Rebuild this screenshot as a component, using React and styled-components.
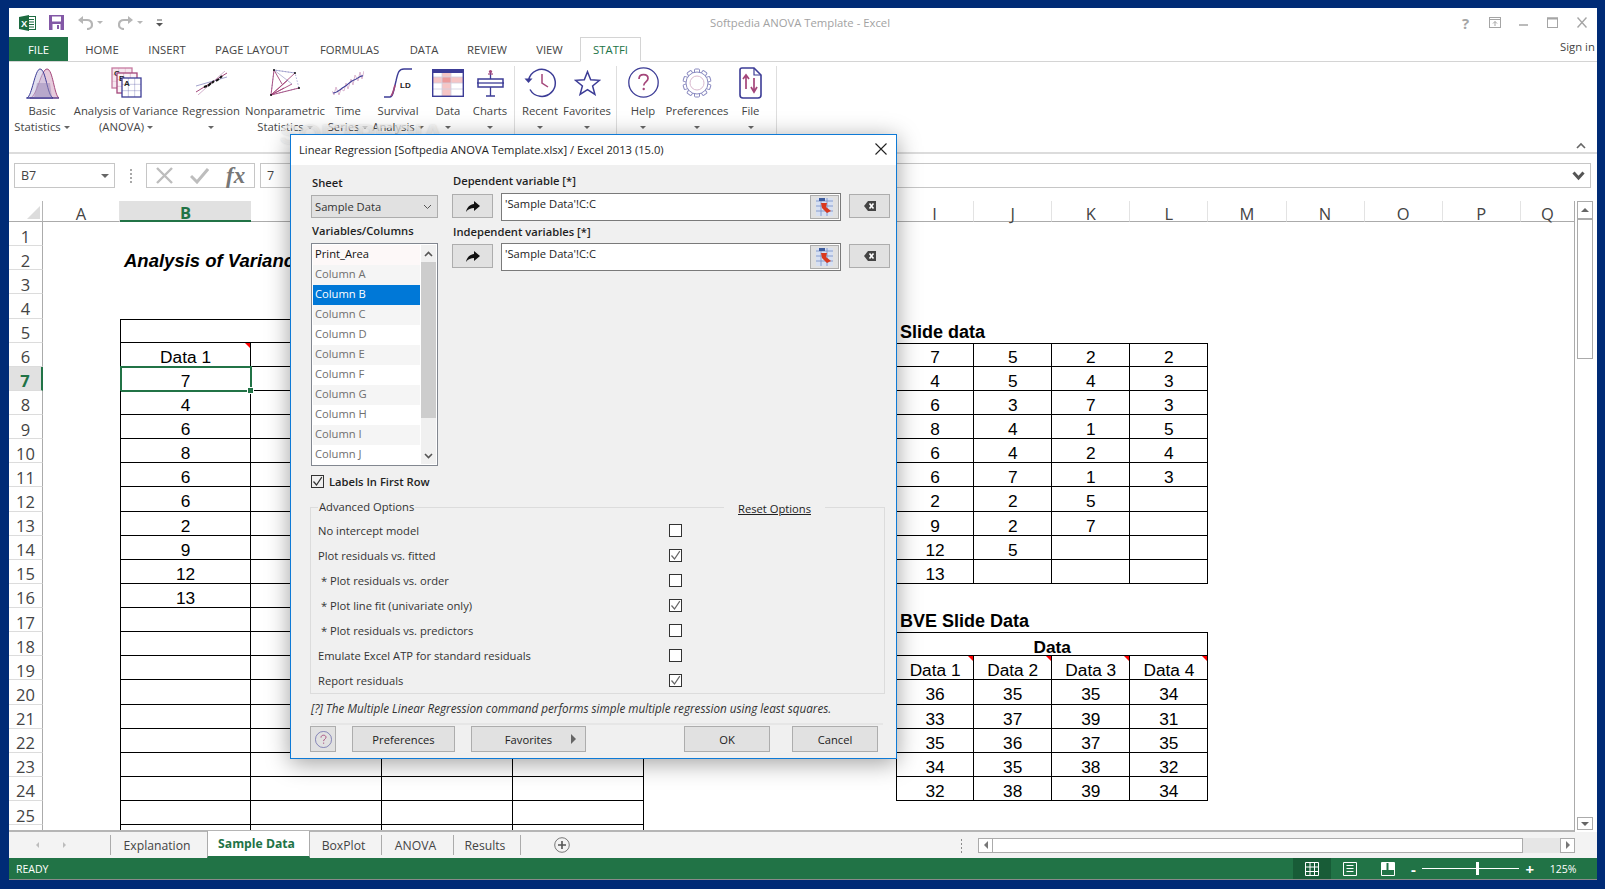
import React from "react";
import styled, { createGlobalStyle } from "styled-components";

const UI = `"Open Sans", "Noto Sans", sans-serif`;
const PURPLE = "#3c3c96";
const WINE = "#a4467a";
const GREEN = "#217346";

const GlobalStyle = createGlobalStyle`
  html, body { margin: 0; padding: 0; height: 100%; overflow: hidden; }
  body { background: #002b76; font-family: ${UI}; }
  #root { height: 100%; }
`;

const Frame = styled.div`
  width: 1605px;
  height: 889px;
  box-sizing: border-box;
  padding: 8px 8px 9px 9px;
  position: relative;
  overflow: hidden;
`;

const ExcelWindow = styled.div`
  height: 100%;
  background: #fff;
  display: flex;
  flex-direction: column;
  overflow: hidden;
`;

/* title bar */
const TitleBar = styled.div`
  height: 29px;
  flex: none;
  display: flex;
  align-items: center;
`;

const QuickBar = styled.div`
  display: flex;
  align-items: center;
  width: 420px;
  flex: none;
  padding-left: 10px;
  box-sizing: border-box;
`;

const QuickItem = styled.div`
  display: flex;
  align-items: center;
  margin-left: ${({ $ml }) => $ml || 0}px;
`;

const Caret = styled.span`
  display: inline-block;
  width: 0;
  height: 0;
  border-left: 3px solid transparent;
  border-right: 3px solid transparent;
  border-top: 3px solid ${({ $color }) => $color || "#666"};
  vertical-align: middle;
  margin-left: ${({ $gap }) => $gap ?? 3}px;
`;

const WindowTitle = styled.div`
  width: 742px;
  flex: none;
  text-align: center;
  font-size: 11.3px;
  color: #a2a2a2;
  white-space: nowrap;
`;

const WinButtons = styled.div`
  display: flex;
  align-items: center;
  margin-left: auto;
  padding-right: 1px;
`;

const WinSlot = styled.div`
  width: 29px;
  flex: none;
  display: flex;
  align-items: center;
  justify-content: center;
  color: #a5a5a5;
  font-size: 15px;
  font-weight: 700;
`;

const TabRow = styled.div`
  height: 25px;
  flex: none;
  display: flex;
  align-items: stretch;
  border-bottom: 1px solid #d4d4d4;
  box-sizing: border-box;
  font-size: 11.3px;
  color: #444;
`;

const RibbonTab = styled.div`
  width: ${({ $w }) => $w}px;
  flex: none;
  display: flex;
  align-items: center;
  justify-content: center;
  box-sizing: border-box;
  white-space: nowrap;
  ${({ $file }) => $file && `background: ${GREEN}; color: #fff;`}
  ${({ $active }) =>
    $active &&
    `color: ${GREEN}; background: #fff; border: 1px solid #d4d4d4; border-bottom: 1px solid #fff; height: 25px;`}
`;

const SignIn = styled.div`
  margin-left: auto;
  align-self: flex-start;
  margin-top: 2px;
  font-size: 11.3px;
  color: #444;
  width: 37px;
  white-space: nowrap;
  overflow: hidden;
`;

/* ribbon */
const Ribbon = styled.div`
  height: 92px;
  flex: none;
  display: flex;
  box-sizing: border-box;
  padding-left: 5px;
  border-bottom: 2px solid #dcdcdc;
  position: relative;
`;

const RibbonItem = styled.div`
  width: ${({ $w }) => $w}px;
  flex: none;
  display: flex;
  flex-direction: column;
  align-items: center;
  font-size: 11.3px;
  line-height: 16px;
  color: #444;
  white-space: nowrap;
`;

const IconSlot = styled.div`
  height: 41px;
  flex: none;
  display: flex;
  align-items: center;
  justify-content: center;
`;

const RibbonSep = styled.div`
  width: 1px;
  flex: none;
  height: 68px;
  margin-top: 4px;
  background: #dedede;
`;

const RibbonSpacer = styled.div`
  width: ${({ $w }) => $w}px;
  flex: none;
`;

const CollapseMark = styled.svg`
  position: absolute;
  right: 11px;
  bottom: 3px;
`;

/* formula bar */
const FormulaBar = styled.div`
  height: 47px;
  flex: none;
  display: flex;
  box-sizing: border-box;
  padding: 9px 6px 0 5px;
  gap: 5px;
`;

const BarBox = styled.div`
  height: 25px;
  box-sizing: border-box;
  border: 1px solid #c6c6c6;
  background: #fff;
  display: flex;
  align-items: center;
  font-size: 12.5px;
  color: #444;
  width: ${({ $w }) => ($w ? `${$w}px` : "auto")};
  flex: ${({ $w }) => ($w ? "none" : "1")};
  padding: 0 5px 0 6px;
  justify-content: space-between;
`;

const GripDots = styled.div`
  width: 21px;
  flex: none;
  height: 25px;
  display: flex;
  flex-direction: column;
  justify-content: center;
  align-items: center;
  gap: 2px;
  span { width: 2px; height: 2px; background: #a8a8a8; }
`;

const FxIcons = styled.div`
  display: flex;
  align-items: center;
  gap: 17px;
  width: 100%;
  padding-left: 3px;
`;

const FxMark = styled.span`
  font-family: "Liberation Serif", serif;
  font-style: italic;
  font-weight: 700;
  font-size: 23px;
  color: #777;
  line-height: 1;
`;

/* sheet */
const SheetArea = styled.div`
  height: 631px;
  flex: none;
  display: flex;
`;

const SheetGrid = styled.div`
  width: 1566px;
  flex: none;
  overflow: hidden;
  display: grid;
  grid-template-columns: 34px 77px repeat(4, 131.1px) repeat(3, 83.9px) repeat(8, 78.1px) 54px;
  grid-auto-rows: 24.14px;
  grid-template-rows: 21px;
  font-family: "Liberation Sans", Arial, sans-serif;
  font-size: 17.3px;
  color: #000;
  border-right: 1px solid #ababab;
  border-bottom: 2px solid #b5b5b5;
  box-sizing: border-box;
`;

const Corner = styled.div`
  border-right: 1px solid #b5b5b5;
  border-bottom: 1px solid #ababab;
  box-sizing: border-box;
  position: relative;
  &::after {
    content: "";
    position: absolute;
    right: 2px;
    bottom: 2px;
    border-left: 13px solid transparent;
    border-bottom: 13px solid #dcdcdc;
  }
`;

const ColHead = styled.div`
  display: flex;
  align-items: center;
  justify-content: center;
  font-family: ${UI};
  font-size: 16.5px;
  box-sizing: border-box;
  padding-top: 4px;
  color: #444;
  border-right: 1px solid #e3e3e3;
  border-bottom: 1px solid #ababab;
  ${({ $active }) =>
    $active &&
    `background: #e1e1e1; color: ${GREEN}; font-weight: 700; border-bottom: 2px solid ${GREEN}; border-right: none;`}
`;

const RowHead = styled.div`
  display: flex;
  align-items: center;
  justify-content: center;
  font-family: ${UI};
  font-size: 16.5px;
  box-sizing: border-box;
  padding-top: 5px;
  color: #444;
  border-right: 1px solid #ababab;
  border-bottom: 1px solid #dcdcdc;
  ${({ $active }) =>
    $active &&
    `background: #e1e1e1; color: ${GREEN}; font-weight: 700; border-right: 2px solid ${GREEN};`}
`;

const Cell = styled.div`
  grid-column: span ${({ $span }) => $span || 1};
  display: flex;
  align-items: center;
  justify-content: center;
  position: relative;
  box-sizing: border-box;
  padding-top: 6px;
  white-space: nowrap;
  min-width: 0;
  font-weight: ${({ $bold }) => ($bold ? 700 : 400)};
  ${({ $box }) => $box && "border-right: 1px solid #000; border-bottom: 1px solid #000;"}
  ${({ $first }) => $first && "border-left: 1px solid #000;"}
  ${({ $top }) => $top && "border-top: 1px solid #000;"}
  ${({ $note }) =>
    $note &&
    `&::after {
      content: "";
      position: absolute;
      top: 0;
      right: 0;
      border-top: 5px solid #f00;
      border-left: 5px solid transparent;
    }`}
  ${({ $current }) =>
    $current &&
    `&::before {
      content: "";
      position: absolute;
      inset: -1px -2px -2px -1px;
      border: 2px solid ${GREEN};
      pointer-events: none;
    }
    &::after {
      content: "";
      position: absolute;
      right: -4px;
      bottom: -4px;
      width: 5px;
      height: 5px;
      background: ${GREEN};
      border: 1px solid #fff;
      z-index: 2;
    }`}
`;

const Heading = styled.span`
  position: absolute;
  left: ${({ $left }) => $left}px;
  top: ${({ $y }) => $y || 3}px;
  font-weight: 700;
  font-size: ${({ $size }) => $size}px;
  font-style: ${({ $italic }) => ($italic ? "italic" : "normal")};
`;

const VScroll = styled.div`
  flex: 1;
  display: flex;
  flex-direction: column;
  padding: 0 4px 2px 2px;
  box-sizing: border-box;
`;

const ScrollBtn = styled.div`
  height: ${({ $h }) => $h}px;
  flex: none;
  box-sizing: border-box;
  border: 1px solid #ababab;
  display: flex;
  align-items: center;
  justify-content: center;
  background: #fff;
`;

const VThumb = styled.div`
  height: 140px;
  flex: none;
  box-sizing: border-box;
  border: 1px solid #ababab;
  background: #fff;
`;

const VTrack = styled.div`
  flex: 1;
  background: #fff;
`;

const Tri = styled.span`
  width: 0;
  height: 0;
  display: inline-block;
  ${({ $dir, $c = "#777", $s = 4 }) => {
    const side = `${$s}px solid transparent`;
    const solid = `${$s}px solid ${$c}`;
    if ($dir === "up") return `border-left:${side};border-right:${side};border-bottom:${solid};`;
    if ($dir === "down") return `border-left:${side};border-right:${side};border-top:${solid};`;
    if ($dir === "left") return `border-top:${side};border-bottom:${side};border-right:${solid};`;
    return `border-top:${side};border-bottom:${side};border-left:${solid};`;
  }}
`;

/* sheet tabs */
const TabsBar = styled.div`
  height: 26px;
  flex: none;
  background: #f3f3f3;
  display: flex;
  align-items: center;
  font-size: 12.2px;
  color: #444;
`;

const NavArrows = styled.div`
  width: 101px;
  flex: none;
  display: flex;
  gap: 24px;
  padding-left: 27px;
  box-sizing: border-box;
`;

const SheetTab = styled.div`
  width: ${({ $w }) => $w}px;
  height: 26px;
  flex: none;
  display: flex;
  align-items: center;
  justify-content: center;
  box-sizing: border-box;
  padding-right: 4px;
  ${({ $active }) =>
    $active
      ? `background: #fff; color: ${GREEN}; font-weight: 700; border-bottom: 2px solid ${GREEN}; border-left: 1px solid #ababab; border-right: 1px solid #ababab; margin-top: -1px; height: 27px;`
      : ""}
`;

const TabSep = styled.div`
  width: 1px;
  height: 20px;
  flex: none;
  background: #ababab;
`;

const AddSheet = styled.svg`
  margin-left: 33px;
  flex: none;
`;

const HScroll = styled.div`
  margin-left: auto;
  margin-right: 22px;
  width: 597px;
  height: 15px;
  flex: none;
  display: flex;
  background: #e6e6e6;
  position: relative;
`;

const HBtn = styled.div`
  width: ${({ $w }) => $w}px;
  flex: none;
  box-sizing: border-box;
  border: 1px solid #ababab;
  ${({ $thumb }) => $thumb && "border-left: none;"}
  background: #fff;
  display: flex;
  align-items: center;
  justify-content: center;
`;

const HGap = styled.span`
  flex: 1;
`;

const Grip = styled.div`
  position: absolute;
  left: -17px;
  top: 1px;
  display: flex;
  flex-direction: column;
  gap: 2px;
  span { width: 1px; height: 2px; background: #8c8c8c; }
`;

/* status bar */
const StatusBar = styled.div`
  flex: 1;
  background: ${GREEN};
  color: #fff;
  display: flex;
  align-items: center;
  font-size: 10.5px;
  padding-left: 7px;
  border-bottom: 1px solid #8a8a8a;
`;

const StatusRight = styled.div`
  margin-left: auto;
  display: flex;
  align-items: center;
  height: 100%;
`;

const ViewBtn = styled.div`
  width: 38px;
  height: 100%;
  display: flex;
  align-items: center;
  justify-content: center;
  background: ${({ $on }) => ($on ? "#185c37" : "transparent")};
`;

const Zoom = styled.div`
  display: flex;
  align-items: center;
  margin-left: 4px;
  width: 123px;
  flex: none;
  gap: 6px;
  font-size: 15px;
  font-weight: 700;
`;

const Slider = styled.div`
  flex: 1;
  height: 1px;
  background: #fff;
  position: relative;
  &::after {
    content: "";
    position: absolute;
    left: 54px;
    top: -6px;
    width: 3px;
    height: 13px;
    background: #fff;
  }
`;

const ZoomPct = styled.div`
  width: 63px;
  flex: none;
  text-align: center;
  padding-right: 5px;
  box-sizing: border-box;
`;

/* watermark */
const Watermark = styled.div`
  position: absolute;
  left: 280px;
  top: 118px;
  font-family: "Liberation Sans", sans-serif;
  font-weight: 700;
  font-size: 28.5px;
  color: rgba(255, 255, 255, 0.7);
  text-shadow: 0 0 2px rgba(130, 130, 130, 0.3);
  white-space: nowrap;
`;

/* dialog */
const Dialog = styled.div`
  position: absolute;
  left: 290px;
  top: 134px;
  width: 607px;
  height: 625px;
  box-sizing: border-box;
  border: 1px solid #0e7ad6;
  background: #f0f0f0;
  box-shadow: 0 4px 22px rgba(0, 0, 0, 0.38);
  font-size: 11.2px;
  color: #222;
  display: flex;
  flex-direction: column;
`;

const DialogTitle = styled.div`
  height: 30px;
  flex: none;
  box-sizing: border-box;
  background: #fff;
  display: flex;
  align-items: center;
  justify-content: space-between;
  padding: 0 9px 2px 8px;
  color: #1e1e1e;
`;

const DialogBody = styled.div`
  flex: 1;
  display: flex;
  flex-direction: column;
  padding: 0 11px 0 20px;
`;

const TopColumns = styled.div`
  display: flex;
  height: 342px;
  flex: none;
`;

const LeftCol = styled.div`
  width: 127px;
  flex: none;
  margin-right: 14px;
  display: flex;
  flex-direction: column;
`;

const RightCol = styled.div`
  flex: 1;
  display: flex;
  flex-direction: column;
`;

const FieldLabel = styled.div`
  font-weight: 600;
  color: #1f1f1f;
  height: ${({ $h }) => $h}px;
  line-height: ${({ $h, $pt = 0 }) => $h - $pt}px;
  padding: ${({ $pt = 0 }) => $pt}px 0 0 1px;
  box-sizing: border-box;
  flex: none;
  white-space: nowrap;
`;

const SelectBox = styled.div`
  height: 23px;
  flex: none;
  box-sizing: border-box;
  background: #e1e1e1;
  border: 1px solid #adadad;
  display: flex;
  align-items: center;
  justify-content: space-between;
  padding: 0 5px 0 3px;
  color: #333;
`;

const ListBox = styled.div`
  height: 223px;
  flex: none;
  box-sizing: border-box;
  border: 1px solid #828790;
  background: #fff;
  display: flex;
  padding: 1px;
`;

const ListItems = styled.div`
  flex: 1;
  overflow: hidden;
`;

const ListRow = styled.div`
  height: 20px;
  line-height: 18px;
  padding-left: 2px;
  color: ${({ $state }) => ($state === "on" ? "#fff" : $state === "top" ? "#111" : "#6f6f6f")};
  background: ${({ $state, $alt }) =>
    $state === "on" ? "#0078d7" : $state === "top" ? "#fdf8f8" : $alt ? "#f5f5f5" : "#fff"};
`;

const ListScroll = styled.div`
  width: 15px;
  flex: none;
  margin-left: 1px;
  background: #f0f0f0;
  display: flex;
  flex-direction: column;
`;

const ListArrow = styled.div`
  height: 17px;
  flex: none;
  display: flex;
  align-items: center;
  justify-content: center;
`;

const ListThumb = styled.div`
  height: 156px;
  flex: none;
  background: #cdcdcd;
`;

const ListRest = styled.span`
  flex: 1;
`;

const CheckRow = styled.label`
  display: flex;
  align-items: center;
  gap: 5px;
  height: 30px;
  flex: none;
  font-weight: 600;
  white-space: nowrap;
`;

const CheckBox = styled.span`
  width: 13px;
  height: 13px;
  flex: none;
  box-sizing: border-box;
  border: 1px solid #333;
  background: ${({ $plain }) => ($plain ? "transparent" : "#fff")};
  display: flex;
  align-items: center;
  justify-content: center;
`;

const RefRow = styled.div`
  display: flex;
  align-items: flex-start;
  height: 28px;
  flex: none;
`;

const ArrowBtn = styled.div`
  width: 41px;
  height: 24px;
  flex: none;
  box-sizing: border-box;
  background: #e1e1e1;
  border: 1px solid #adadad;
  display: flex;
  align-items: center;
  justify-content: center;
  margin-top: 1px;
  margin-right: ${({ $last }) => ($last ? 0 : 8)}px;
`;

const RefInput = styled.div`
  width: 340px;
  height: 28px;
  flex: none;
  box-sizing: border-box;
  background: #fff;
  border: 1px solid #7a7a7a;
  display: flex;
  justify-content: space-between;
  padding: 1px 1px 1px 3px;
  margin-right: 8px;
`;

const RefText = styled.span`
  line-height: 17px;
  color: #222;
`;

const RangeBtn = styled.div`
  width: 29px;
  flex: none;
  box-sizing: border-box;
  background: #e1e1e1;
  border: 1px solid #adadad;
  display: flex;
  align-items: center;
  justify-content: center;
`;

const Advanced = styled.div`
  height: 187px;
  flex: none;
  margin-left: -1px;
  box-sizing: border-box;
  border: 1px solid #dcdcdc;
  padding: 10px 0 0 7px;
  position: relative;
`;

const Legend = styled.span`
  position: absolute;
  left: 7px;
  top: -9px;
  background: #f0f0f0;
  padding: 0 1px;
  color: #333;
  line-height: 16px;
`;

const ResetLink = styled.span`
  position: absolute;
  left: 413px;
  top: -7px;
  width: 101px;
  text-align: center;
  background: #f0f0f0;
  color: #222;
  line-height: 16px;
  text-decoration: underline;
`;

const OptionRow = styled.div`
  height: 25px;
  display: grid;
  grid-template-columns: 351px 13px;
  align-items: center;
  color: #333;
  white-space: pre;
`;

const HelpNote = styled.div`
  height: 31px;
  line-height: 29px;
  flex: none;
  font-size: 11.7px;
  font-style: italic;
  color: #333;
  white-space: nowrap;
  border-bottom: 2px solid #e6e6e6;
  box-sizing: border-box;
  margin-right: 2px;
`;

const DialogFooter = styled.div`
  display: flex;
  align-items: center;
  padding-top: 1px;
  margin-left: -1px;
`;

const DlgButton = styled.div`
  width: ${({ $w }) => $w}px;
  height: 26px;
  flex: none;
  box-sizing: border-box;
  background: #e1e1e1;
  border: 1px solid #adadad;
  display: flex;
  align-items: center;
  justify-content: center;
  margin-left: ${({ $gap }) => $gap || 0}px;
  color: #222;
  position: relative;
`;

const FavArrow = styled.span`
  position: absolute;
  right: 9px;
  top: 7px;
  line-height: 0;
`;

/* ---- icons ---- */
const Svg = ({ w, h, vb, children, ...rest }) => (
  <svg width={w} height={h} viewBox={vb || `0 0 ${w} ${h}`} fill="none" {...rest}>
    {children}
  </svg>
);

const BasicIcon = () => (
  <Svg w={33} h={32}>
    <path d="M4 31 C11 30 15 2 21 2 C27 2 28 28 33 31 Z" fill="#e6cbdc" stroke={WINE} strokeWidth="1" />
    <path d="M1 31 C6 29 9 2 14 2 C20 2 21 28 27 31 Z" fill="#c9c3e0" fillOpacity=".55" stroke={PURPLE} strokeWidth="1" />
    <path d="M11 16 H24 L26 31 H8 Z" fill="#9a8ab8" fillOpacity=".5" />
    <path d="M0 31 H33" stroke={PURPLE} strokeWidth="1" />
  </Svg>
);

const GridSheet = ({ x, y, s, c, fill, label }) => {
  const d = s / 3;
  return (
    <g>
      <rect x={x} y={y} width={s} height={s} fill={fill} stroke={c} strokeWidth="1.3" />
      <path d={`M${x + d} ${y}V${y + s}M${x + 2 * d} ${y}V${y + s}M${x} ${y + d}H${x + s}M${x} ${y + 2 * d}H${x + s}`} stroke={c} strokeOpacity=".4" strokeWidth=".7" />
      <text x={x + 2} y={y + 8} fontSize="8" fontWeight="700" fontFamily="Liberation Sans" fill="#222">{label}</text>
    </g>
  );
};

const AnovaIcon = () => (
  <Svg w={31} h={32}>
    <GridSheet x={1} y={1} s={20} c="#c77aa0" fill="#f6e8ef" label="C" />
    <GridSheet x={6} y={6} s={20} c={WINE} fill="#fbf2f6" label="B" />
    <GridSheet x={11} y={11} s={19} c={PURPLE} fill="#fff" label="A" />
  </Svg>
);

const RegressionIcon = () => (
  <Svg w={33} h={24}>
    <path d="M1 21 L32 2" stroke={WINE} strokeWidth="1" />
    <path d="M1 15 L32 6" stroke="#8c8cc0" strokeWidth=".8" />
    <path d="M3 24 L30 0" stroke="#c8a0c0" strokeWidth=".8" />
    <path d="M9 16 l3 -1 M13 15 l3 -3 M17 12 l2 -2 M21 10 l3 -2 M25 7 l2 -2" stroke="#111" strokeWidth="2" />
  </Svg>
);

const NonparamIcon = () => (
  <Svg w={30} h={29}>
    <path d="M1 27 L4 2 L25 5 L29 20 Z" stroke="#9a9ad0" strokeDasharray="1.5 1.5" strokeWidth=".8" />
    <path d="M1 27 L25 5 M1 27 L18 12 M1 27 L29 20 M1 27 L22 16 M1 27 L14 20 M1 27 L4 2 M4 2 L12 16" stroke={WINE} strokeWidth=".9" />
    <path d="M4 2 L25 5 M4 2 L22 16" stroke="#8c8cc0" strokeWidth=".6" />
    <circle cx="4" cy="2" r="1" fill="#111" />
    <circle cx="25" cy="5" r="1" fill="#111" />
    <circle cx="29" cy="20" r="1" fill="#111" />
    <circle cx="1" cy="27" r="1" fill="#111" />
  </Svg>
);

const TimeIcon = () => (
  <Svg w={32} h={28}>
    <path d="M0 22 L2 26 L4 18 L7 26 L9 20 L12 22 L14 14 L16 20 L19 10 L21 16 L23 6 L26 12 L28 3 L30 10 L32 2" stroke="#d8b0cc" strokeWidth=".9" />
    <path d="M1 24 C6 24 8 20 12 18 C16 16 18 12 22 11 C26 10 28 6 31 7" stroke={PURPLE} strokeWidth="1.2" />
  </Svg>
);

const SurvivalIcon = () => (
  <Svg w={30} h={32}>
    <path d="M1 30 H7 C10 30 11 22 13 14 C15 5 16 2 21 2 H29" stroke={PURPLE} strokeWidth="1.4" />
    <path d="M8 29 C10 27 11 22 12 18" stroke={WINE} strokeWidth="1.6" />
    <text x="17" y="21" fontSize="8" fontWeight="700" fontFamily="Liberation Sans" fill="#222">LD</text>
  </Svg>
);

const DataIcon = () => (
  <Svg w={32} h={28}>
    <rect x="10" y="2" width="9" height="25" fill="#f6c5c5" />
    <rect x="1" y="8" width="30" height="6" fill="#f6c5c5" />
    <rect x="10" y="8" width="9" height="6" fill="#ec9a9a" />
    <path d="M10 4V27M19 4V27M1 8H31M1 14H31M1 20H31" stroke="#cfcfe0" strokeWidth=".8" />
    <rect x=".7" y=".7" width="30.6" height="26.6" stroke={PURPLE} strokeWidth="1.4" />
    <rect x="1" y="1" width="30" height="3" fill={PURPLE} />
  </Svg>
);

const ChartsIcon = () => (
  <Svg w={27} h={28}>
    <path d="M13.5 2V10M13.5 18V27M9 27H18M0 14H27" stroke={PURPLE} strokeWidth="1.3" />
    <circle cx="13.5" cy="2.5" r="1.6" fill={WINE} />
    <path d="M11 5H16" stroke={WINE} strokeWidth="1.2" />
    <rect x="1" y="10" width="25" height="8" fill="#fff" stroke={PURPLE} strokeWidth="1.5" />
    <path d="M1 14H26" stroke={PURPLE} strokeWidth="1.3" />
  </Svg>
);

const RecentIcon = () => (
  <Svg w={33} h={31}>
    <path d="M4.6 13 A13.5 13.5 0 1 1 6 22.5" stroke={PURPLE} strokeWidth="1.5" />
    <path d="M0.5 11.5 L4.5 16 L8.5 11.5 Z" fill={PURPLE} />
    <path d="M18 7 V16 L24 20" stroke={WINE} strokeWidth="1.5" />
  </Svg>
);

const StarIcon = () => (
  <Svg w={27} h={26}>
    <path d="M13.5 1.7 L16.7 9.8 L25.5 10.3 L18.6 15.9 L20.9 24.4 L13.5 19.6 L6.1 24.4 L8.4 15.9 L1.5 10.3 L10.3 9.8 Z" stroke={PURPLE} strokeWidth="1.5" />
  </Svg>
);

const HelpIcon = ({ s = 31, sw = 1.3 }) => (
  <svg width={s} height={s} viewBox="0 0 31 31" fill="none">
    <circle cx="15.5" cy="15.5" r="14.7" stroke={PURPLE} strokeWidth={sw} />
    <path d="M11 12 C11 9 13 7.7 15.6 7.7 C18.2 7.7 20 9.2 20 11.5 C20 14.6 15.7 15 15.7 18.4" stroke={WINE} strokeWidth="1.7" />
    <circle cx="15.7" cy="22" r="1.2" fill={WINE} />
  </svg>
);

const GearIcon = () => {
  const teeth = Array.from({ length: 10 }, (_, i) => i * 36);
  return (
    <Svg w={30} h={30}>
      {teeth.map((a) => (
        <rect key={a} x="12.5" y="1" width="5" height="5" rx="1" stroke="#8a8ac0" strokeWidth="1" transform={`rotate(${a} 15 15)`} fill="#fff" />
      ))}
      <circle cx="15" cy="15" r="11" fill="#fff" stroke="#8a8ac0" strokeWidth="1" />
      <circle cx="15" cy="15" r="7" fill="#fff" stroke="#d9b9cf" strokeWidth="1" />
    </Svg>
  );
};

const FileIcon = () => (
  <Svg w={23} h={32}>
    <path d="M3 1 H15 L22 8 V28 Q22 31 19 31 H4 Q1 31 1 28 V3 Q1 1 3 1 Z" stroke={PURPLE} strokeWidth="1.6" />
    <path d="M15 1 V8 H22" stroke={PURPLE} strokeWidth="1.2" />
    <path d="M7 22 V9 M4 12 L7 8 L10 12" stroke={WINE} strokeWidth="1.7" />
    <path d="M15 11 V24 M12 20 L15 25 L18 20" stroke={WINE} strokeWidth="1.7" />
  </Svg>
);

const ExcelLogo = () => (
  <Svg w={17} h={16}>
    <rect x="7" y="1.5" width="9.5" height="13" fill="#fff" stroke="#1d6b40" />
    <path d="M10 4.5H15M10 7H15M10 9.5H15M10 12H15" stroke="#1d6b40" strokeWidth="1.1" />
    <path d="M0 2 L10 0 V16 L0 14 Z" fill="#1d6b40" />
    <text x="2" y="11.5" fontSize="9.5" fontWeight="700" fontFamily="Liberation Sans" fill="#fff">X</text>
  </Svg>
);

const SaveIcon = () => (
  <Svg w={15} h={15}>
    <path d="M0 0 H15 V15 H0 Z" fill="#8358a6" />
    <rect x="3" y="1.5" width="9" height="5" fill="#fff" />
    <rect x="3.5" y="9" width="8" height="6" fill="#fff" />
    <rect x="8" y="10" width="2" height="4" fill="#8358a6" />
  </Svg>
);

const UndoIcon = ({ flip }) => (
  <Svg w={15} h={14} style={flip ? { transform: "scaleX(-1)" } : undefined}>
    <path d="M3 4 H9 C13 4 14 7 14 9 C14 11 12 13 9 13" stroke="#b6b6b6" strokeWidth="2.2" />
    <path d="M5 0 V8 L0 4 Z" fill="#b6b6b6" />
  </Svg>
);

const CustomizeIcon = () => (
  <Svg w={7} h={8}>
    <path d="M1 1 H6" stroke="#555" strokeWidth="1" />
    <path d="M0 4 H7 L3.5 7.5 Z" fill="#555" />
  </Svg>
);

const WinIcons = () => (
  <WinButtons>
    <WinSlot>?</WinSlot>
    <WinSlot>
      <Svg w={12} h={11}>
        <rect x=".5" y=".5" width="11" height="10" stroke="#a5a5a5" />
        <path d="M0 2.5H12" stroke="#a5a5a5" />
        <path d="M6 9V4.5M4 6.5L6 4.5L8 6.5" stroke="#a5a5a5" />
      </Svg>
    </WinSlot>
    <WinSlot>
      <Svg w={10} h={10}>
        <path d="M0 7 H9" stroke="#a5a5a5" strokeWidth="1.5" />
      </Svg>
    </WinSlot>
    <WinSlot>
      <Svg w={11} h={11}>
        <rect x=".5" y="1" width="10" height="9.5" stroke="#a5a5a5" />
        <path d="M0 1.5H11" stroke="#a5a5a5" strokeWidth="2" />
      </Svg>
    </WinSlot>
    <WinSlot>
      <Svg w={10} h={11}>
        <path d="M.5 .5L9.5 10.5M9.5 .5L.5 10.5" stroke="#a5a5a5" strokeWidth="1.4" />
      </Svg>
    </WinSlot>
  </WinButtons>
);

const CheckMark = ({ c = "#666" }) => (
  <Svg w={11} h={11}>
    <path d="M1.5 5.5 L4.5 9 L9.8 1.2" stroke={c} strokeWidth="1.2" />
  </Svg>
);

const RightArrowIcon = () => (
  <Svg w={14} h={11}>
    <path d="M8 0 L14 5 L8 10 V7 C5 7 2 8 0 11 C1 6 4 3.5 8 3 Z" fill="#111" />
  </Svg>
);

const ClearIcon = () => (
  <Svg w={12} h={10}>
    <path d="M4 0 H12 V10 H4 L0 5 Z" fill="#444" />
    <path d="M5.5 2.5 L9.5 7.5 M9.5 2.5 L5.5 7.5" stroke="#fff" strokeWidth="1.6" />
  </Svg>
);

const RangeIcon = () => (
  <Svg w={17} h={18}>
    <rect width="17" height="18" fill="#d7e0f2" />
    <path d="M0 3H17M0 8H17M0 13H17M5 0V18M11 0V18" stroke="#7d94c8" strokeWidth=".9" />
    <rect x="3" y="0" width="6" height="3" fill="#3d5c9e" />
    <path d="M5 5 H11 L10 9 L15 13 L11 15 L6 10 Z" fill="#d9381e" />
  </Svg>
);

const BoxCaret = ({ up, sw = 1.6 }) => (
  <Svg w={9} h={6}>
    <path d={up ? "M1 5 L4.5 1.5 L8 5" : "M1 1 L4.5 4.5 L8 1"} stroke="#555" strokeWidth={sw} />
  </Svg>
);

/* ---- data ---- */
const ribbonItems = [
  { w: 56, icon: <BasicIcon />, lines: ["Basic", "Statistics"], caret: "inline" },
  { w: 112, icon: <AnovaIcon />, lines: ["Analysis of Variance", "(ANOVA)"], caret: "inline" },
  { w: 58, icon: <RegressionIcon />, lines: ["Regression"] },
  { w: 90, icon: <NonparamIcon />, lines: ["Nonparametric", "Statistics"], caret: "inline" },
  { w: 36, icon: <TimeIcon />, lines: ["Time", "Series"], caret: "inline" },
  { w: 64, icon: <SurvivalIcon />, lines: ["Survival", "Analysis"], caret: "inline" },
  { w: 36, icon: <DataIcon />, lines: ["Data"] },
  { w: 48, icon: <ChartsIcon />, lines: ["Charts"] },
  { sep: true },
  { w: 50, icon: <RecentIcon />, lines: ["Recent"] },
  { w: 44, icon: <StarIcon />, lines: ["Favorites"] },
  { gap: 7 },
  { sep: true },
  { w: 52, icon: <HelpIcon />, lines: ["Help"] },
  { w: 56, icon: <GearIcon />, lines: ["Preferences"] },
  { w: 51, icon: <FileIcon />, lines: ["File"] },
  { sep: true },
];

const tabs = [
  ["FILE", 59, "file"],
  ["HOME", 68],
  ["INSERT", 62],
  ["PAGE LAYOUT", 108],
  ["FORMULAS", 87],
  ["DATA", 62],
  ["REVIEW", 64],
  ["VIEW", 61],
  ["STATFI", 61, "active"],
];

const columns = "ABCDEFGHIJKLMNOPQ".split("");
const listNames = ["Print_Area", "Column A", "Column B", "Column C", "Column D", "Column E", "Column F", "Column G", "Column H", "Column I", "Column J"];

const options = [
  ["No intercept model", false],
  ["Plot residuals vs. fitted", true],
  [" * Plot residuals vs. order", false],
  [" * Plot line fit (univariate only)", true],
  [" * Plot residuals vs. predictors", false],
  ["Emulate Excel ATP for standard residuals", false],
  ["Report residuals", true],
];

const slideData = [
  [7, 5, 2, 2], [4, 5, 4, 3], [6, 3, 7, 3], [8, 4, 1, 5], [6, 4, 2, 4],
  [6, 7, 1, 3], [2, 2, 5, ""], [9, 2, 7, ""], [12, 5, "", ""], [13, "", "", ""],
];

const bveData = [
  [36, 35, 35, 34], [33, 37, 39, 31], [35, 36, 37, 35], [34, 35, 38, 32], [32, 38, 39, 34],
];

const leftData = { 6: "Data 1", 7: 7, 8: 4, 9: 6, 10: 8, 11: 6, 12: 6, 13: 2, 14: 9, 15: 12, 16: 13 };

// what a cell of the sheet holds, col is the index into columns
const cellProps = (row, col) => {
  const name = columns[col];
  const props = {};
  if (col >= 1 && col <= 4 && row >= 6) {
    props.$box = true;
    props.$first = col === 1;
    if (col === 1) props.children = leftData[row];
    if (col === 1 && row === 6) props.$note = true;
    if (col === 1 && row === 7) props.$current = true;
  }
  if (col >= 8 && col <= 11) {
    const c = col - 8;
    if (row >= 6 && row <= 15) {
      props.$box = true;
      props.$first = c === 0;
      props.$top = row === 6;
      props.children = slideData[row - 6][c];
    }
    if (row === 19) {
      props.$box = true;
      props.$first = c === 0;
      props.$note = true;
      props.children = `Data ${c + 1}`;
    }
    if (row >= 20 && row <= 24) {
      props.$box = true;
      props.$first = c === 0;
      props.children = bveData[row - 20][c];
    }
  }
  if (name === "I" && row === 5) props.children = <Heading $left={4} $size={18}>Slide data</Heading>;
  if (name === "I" && row === 17) props.children = <Heading $left={4} $size={18}>BVE Slide Data</Heading>;
  if (name === "B" && row === 2) props.children = <Heading $left={4} $y={4} $size={18.5} $italic>Analysis of Variance</Heading>;
  return props;
};

const SheetCells = () => {
  const out = [<Corner key="corner" />];
  columns.forEach((c) => out.push(<ColHead key={c} $active={c === "B"}>{c}</ColHead>));
  for (let row = 1; row <= 26; row++) {
    out.push(<RowHead key={`r${row}`} $active={row === 7}>{row <= 25 ? row : ""}</RowHead>);
    for (let col = 0; col < columns.length; col++) {
      if (row === 5 && col === 1) {
        out.push(<Cell key="merge-5" $span={4} $box $first $top />);
        col = 4;
        continue;
      }
      if (row === 18 && col === 8) {
        out.push(<Cell key="merge-18" $span={4} $box $first $top $bold>Data</Cell>);
        col = 11;
        continue;
      }
      out.push(<Cell key={`${row}-${col}`} {...cellProps(row, col)} />);
    }
  }
  return out;
};

const RefField = ({ label, labelH, labelPt }) => (
  <>
    <FieldLabel $h={labelH} $pt={labelPt}>{label}</FieldLabel>
    <RefRow>
      <ArrowBtn><RightArrowIcon /></ArrowBtn>
      <RefInput>
        <RefText>'Sample Data'!C:C</RefText>
        <RangeBtn><RangeIcon /></RangeBtn>
      </RefInput>
      <ArrowBtn $last><ClearIcon /></ArrowBtn>
    </RefRow>
  </>
);

export default function App() {
  return (
    <Frame>
      <GlobalStyle />
      <ExcelWindow>
        <TitleBar>
          <QuickBar>
            <QuickItem><ExcelLogo /></QuickItem>
            <QuickItem $ml={13}><SaveIcon /></QuickItem>
            <QuickItem $ml={14}><UndoIcon /><Caret $color="#b6b6b6" $gap={4} /></QuickItem>
            <QuickItem $ml={15}><UndoIcon flip /><Caret $color="#b6b6b6" $gap={4} /></QuickItem>
            <QuickItem $ml={13}><CustomizeIcon /></QuickItem>
          </QuickBar>
          <WindowTitle>Softpedia ANOVA Template - Excel</WindowTitle>
          <WinIcons />
        </TitleBar>
        <TabRow>
          {tabs.map(([name, w, kind]) => (
            <RibbonTab key={name} $w={w} $file={kind === "file"} $active={kind === "active"}>{name}</RibbonTab>
          ))}
          <SignIn>Sign in</SignIn>
        </TabRow>
        <Ribbon>
          {ribbonItems.map((item, i) => {
            if (item.sep) return <RibbonSep key={i} />;
            if (item.gap) return <RibbonSpacer key={i} $w={item.gap} />;
            return (
              <RibbonItem key={i} $w={item.w}>
                <IconSlot>{item.icon}</IconSlot>
                {item.lines.map((l, n) => (
                  <div key={l}>
                    {l}
                    {item.caret && n === item.lines.length - 1 && <Caret />}
                  </div>
                ))}
                {!item.caret && <div><Caret $gap={0} /></div>}
              </RibbonItem>
            );
          })}
          <CollapseMark width="10" height="7" viewBox="0 0 10 7" fill="none">
            <path d="M1 6 L5 2 L9 6" stroke="#666" strokeWidth="1.6" />
          </CollapseMark>
        </Ribbon>
        <FormulaBar>
          <BarBox $w={101}>
            B7
            <Tri $dir="down" $c="#666" $s={4} />
          </BarBox>
          <GripDots>
            <span /><span /><span /><span />
          </GripDots>
          <BarBox $w={109}>
            <FxIcons>
              <Svg w={17} h={17}><path d="M1 1 L16 16 M16 1 L1 16" stroke="#bdbdbd" strokeWidth="2.4" /></Svg>
              <Svg w={19} h={17}><path d="M1 9 L7 15 L18 2" stroke="#bdbdbd" strokeWidth="3" /></Svg>
              <FxMark>fx</FxMark>
            </FxIcons>
          </BarBox>
          <BarBox>
            7
            <Svg w={13} h={10}><path d="M1.5 1.5 L6.5 7 L11.5 1.5" stroke="#555" strokeWidth="3" /></Svg>
          </BarBox>
        </FormulaBar>
        <SheetArea>
          <SheetGrid><SheetCells /></SheetGrid>
          <VScroll>
            <ScrollBtn $h={18}><Tri $dir="up" $c="#666" /></ScrollBtn>
            <VThumb />
            <VTrack />
            <ScrollBtn $h={13}><Tri $dir="down" $c="#666" /></ScrollBtn>
          </VScroll>
        </SheetArea>
        <TabsBar>
          <NavArrows>
            <Tri $dir="left" $c="#bdbdbd" $s={3} />
            <Tri $dir="right" $c="#bdbdbd" $s={3} />
          </NavArrows>
          <TabSep />
          <SheetTab $w={96}>Explanation</SheetTab>
          <SheetTab $w={103} $active>Sample Data</SheetTab>
          <SheetTab $w={71}>BoxPlot</SheetTab>
          <TabSep />
          <SheetTab $w={71}>ANOVA</SheetTab>
          <TabSep />
          <SheetTab $w={66}>Results</SheetTab>
          <TabSep />
          <AddSheet width="16" height="16" viewBox="0 0 16 16" fill="none">
            <circle cx="8" cy="8" r="7.3" stroke="#777" />
            <path d="M8 4V12M4 8H12" stroke="#555" strokeWidth="1.6" />
          </AddSheet>
          <HScroll>
            <Grip><span /><span /><span /><span /></Grip>
            <HBtn $w={15}><Tri $dir="left" $c="#777" /></HBtn>
            <HBtn $w={530} $thumb />
            <HGap />
            <HBtn $w={15}><Tri $dir="right" $c="#777" /></HBtn>
          </HScroll>
        </TabsBar>
        <StatusBar>
          READY
          <StatusRight>
            <ViewBtn $on>
              <Svg w={14} h={14}>
                <path d="M.5 .5H13.5V13.5H.5ZM5 .5V13.5M9.5 .5V13.5M.5 5H13.5M.5 9.5H13.5" stroke="#fff" />
              </Svg>
            </ViewBtn>
            <ViewBtn>
              <Svg w={14} h={14}>
                <path d="M.5 .5H13.5V13.5H.5Z" stroke="#fff" />
                <path d="M3.5 3.5H10.5M3.5 6.5H10.5M3.5 9.5H10.5" stroke="#fff" />
              </Svg>
            </ViewBtn>
            <ViewBtn>
              <Svg w={14} h={14}>
                <path d="M.5 .5H13.5V13.5H.5Z" stroke="#fff" />
                <rect x="1" y="1" width="4.5" height="7" fill="#fff" />
                <rect x="7.5" y="1" width="5.5" height="7" fill="#fff" />
              </Svg>
            </ViewBtn>
            <Zoom>
              <span>-</span>
              <Slider />
              <span>+</span>
            </Zoom>
            <ZoomPct>125%</ZoomPct>
          </StatusRight>
        </StatusBar>
      </ExcelWindow>

      <Watermark>SOFTPEDIA</Watermark>

      <Dialog>
        <DialogTitle>
          Linear Regression [Softpedia ANOVA Template.xlsx] / Excel 2013 (15.0)
          <Svg w={12} h={12}><path d="M.5 .5L11.5 11.5M11.5 .5L.5 11.5" stroke="#222" strokeWidth="1.1" /></Svg>
        </DialogTitle>
        <DialogBody>
          <TopColumns>
            <LeftCol>
              <FieldLabel $h={30} $pt={6}>Sheet</FieldLabel>
              <SelectBox>
                Sample Data
                <BoxCaret sw={1} />
              </SelectBox>
              <FieldLabel $h={25}>Variables/Columns</FieldLabel>
              <ListBox>
                <ListItems>
                  {listNames.map((n, i) => (
                    <ListRow key={n} $alt={i % 2 === 1} $state={i === 0 ? "top" : i === 2 ? "on" : undefined}>{n}</ListRow>
                  ))}
                </ListItems>
                <ListScroll>
                  <ListArrow><BoxCaret up /></ListArrow>
                  <ListThumb />
                  <ListRest />
                  <ListArrow><BoxCaret /></ListArrow>
                </ListScroll>
              </ListBox>
              <CheckRow>
                <CheckBox $plain><CheckMark c="#333" /></CheckBox>
                Labels In First Row
              </CheckRow>
            </LeftCol>
            <RightCol>
              <RefField label="Dependent variable [*]" labelH={28} labelPt={4} />
              <RefField label="Independent variables [*]" labelH={22} />
            </RightCol>
          </TopColumns>
          <Advanced>
            <Legend>Advanced Options</Legend>
            <ResetLink>Reset Options</ResetLink>
            {options.map(([label, on]) => (
              <OptionRow key={label}>
                <span>{label}</span>
                <CheckBox>{on && <CheckMark />}</CheckBox>
              </OptionRow>
            ))}
          </Advanced>
          <HelpNote>[?] The Multiple Linear Regression command performs simple multiple regression using least squares.</HelpNote>
          <DialogFooter>
            <DlgButton $w={26}><HelpIcon s={17} sw={1} /></DlgButton>
            <DlgButton $w={103} $gap={16}>Preferences</DlgButton>
            <DlgButton $w={115} $gap={16}>
              Favorites
              <FavArrow><Tri $dir="right" $c="#666" $s={5} /></FavArrow>
            </DlgButton>
            <DlgButton $w={86} $gap={98}>OK</DlgButton>
            <DlgButton $w={86} $gap={22}>Cancel</DlgButton>
          </DialogFooter>
        </DialogBody>
      </Dialog>
    </Frame>
  );
}
